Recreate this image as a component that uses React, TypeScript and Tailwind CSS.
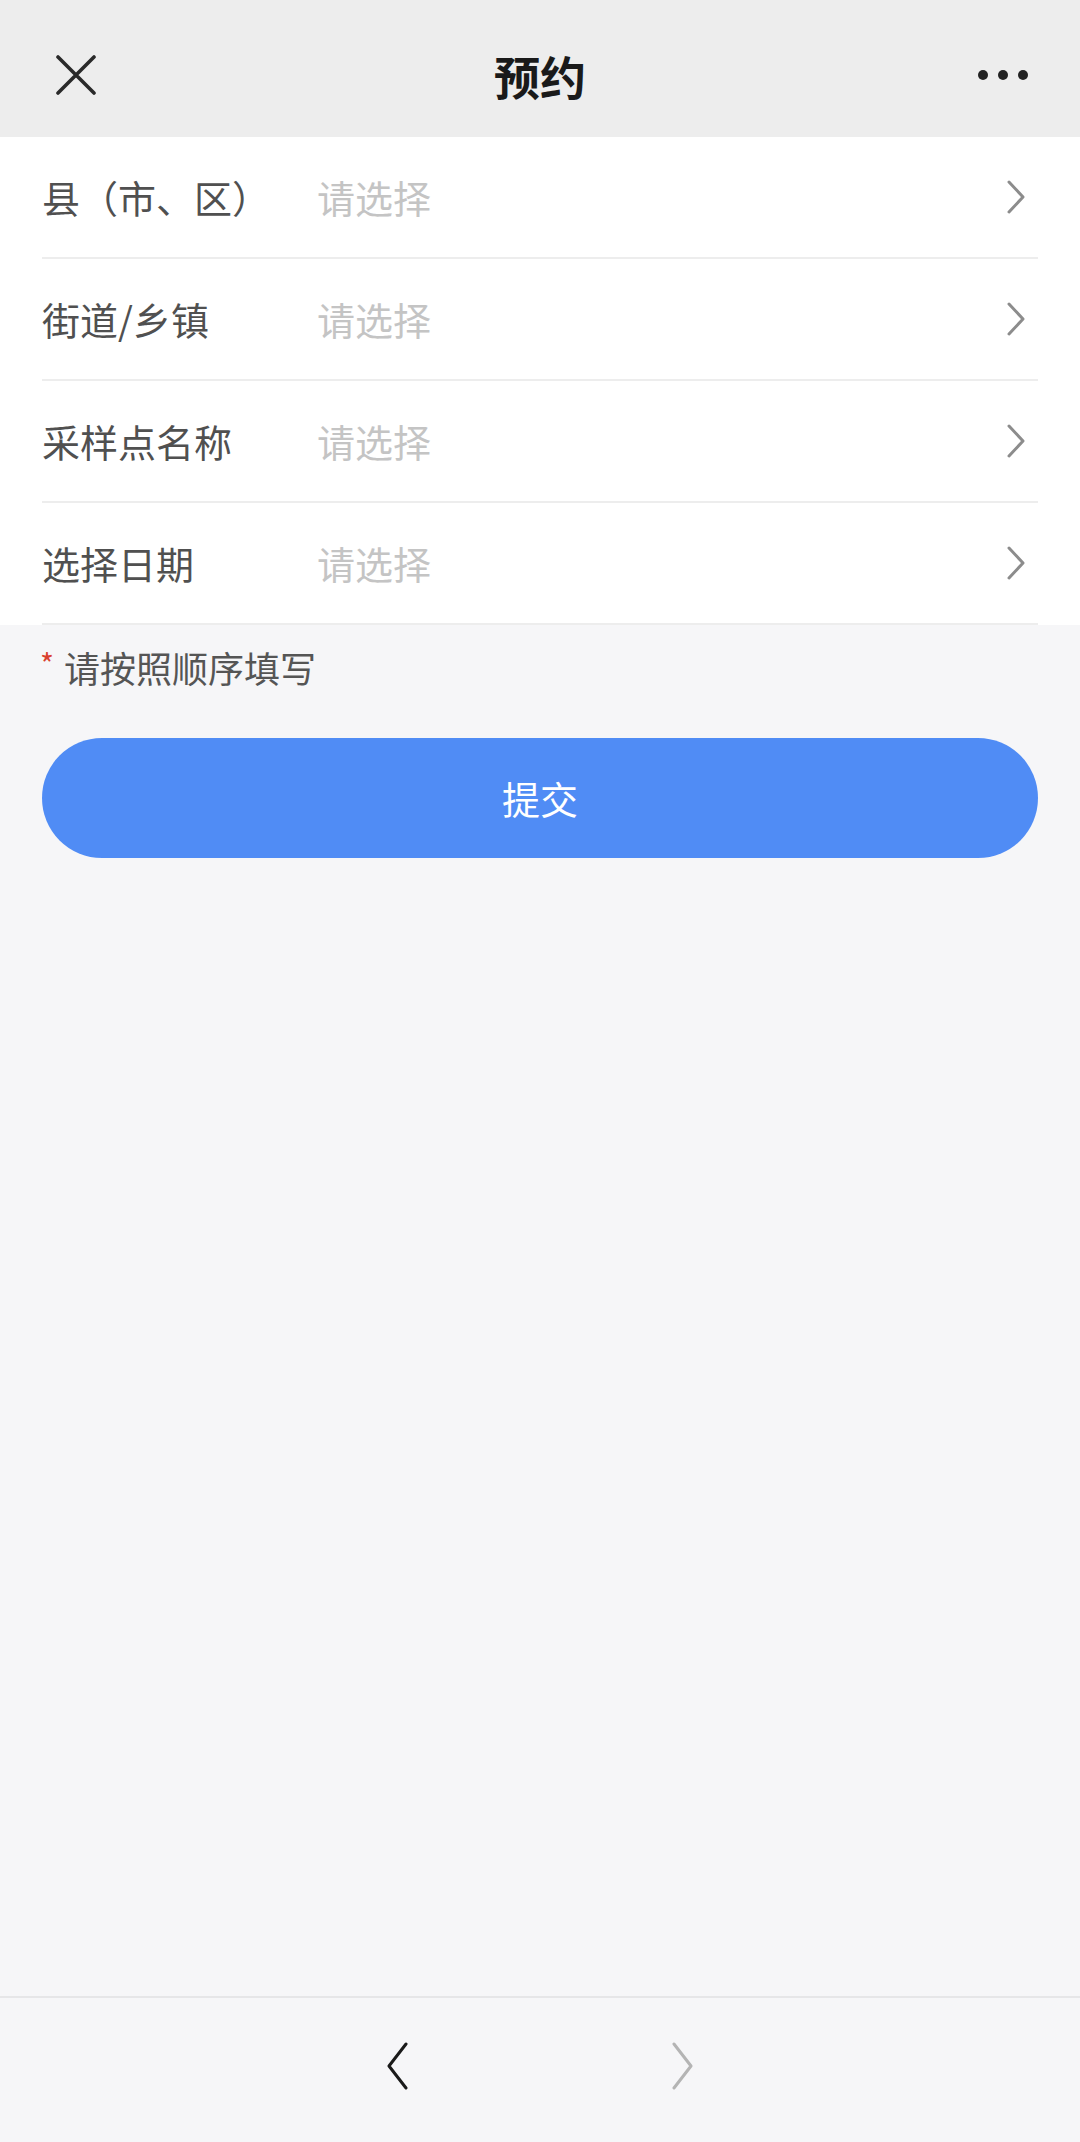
import React from "react";

const rows = ["县（市、区）", "街道/乡镇", "采样点名称", "选择日期"];

function Chevron({ className }: { className?: string }) {
  return (
    <svg width="20" height="34" viewBox="0 0 20 34" className={className} fill="none">
      <path d="M3 2 L17 17 L3 32" stroke="currentColor" strokeWidth="3" strokeLinecap="round" strokeLinejoin="round" />
    </svg>
  );
}

export default function App() {
  return (
    <div
      className="w-[1080px] h-[2142px] flex flex-col bg-[#f6f6f8] overflow-hidden"
      style={{ fontFamily: '"Noto Sans CJK SC", "Noto Sans", sans-serif' }}
    >
      {/* Header */}
      <div className="h-[137px] bg-[#ededed] flex items-center justify-between pl-[56px] pr-[52px] pt-[12px] shrink-0 relative">
        <svg width="40" height="40" viewBox="0 0 40 40" fill="none">
          <path d="M2 2 L38 38 M38 2 L2 38" stroke="#2a2a2a" strokeWidth="3.6" strokeLinecap="round" />
        </svg>
        <div className="absolute left-0 right-0 top-0 h-[137px] pt-[12px] flex items-center justify-center pointer-events-none">
          <span className="text-[46px] font-bold text-[#1a1a1a] leading-none">预约</span>
        </div>
        <div className="flex items-center gap-[10px]">
          <span className="w-[10px] h-[10px] rounded-full bg-[#222]" />
          <span className="w-[10px] h-[10px] rounded-full bg-[#222]" />
          <span className="w-[10px] h-[10px] rounded-full bg-[#222]" />
        </div>
      </div>

      {/* Form rows */}
      <div className="bg-white px-[42px] shrink-0">
        {rows.map((label) => (
          <div key={label} className="h-[122px] flex items-center border-b-2 border-[#ededed]">
            <div className="w-[275px] text-[38px] text-[#505050] leading-none">{label}</div>
            <div className="flex-1 text-[38px] text-[#c4c4c4] leading-none">请选择</div>
            <Chevron className="text-[#8c8c8c] mr-[12px]" />
          </div>
        ))}
      </div>

      {/* Note */}
      <div className="px-[40px] flex items-center h-[84px] shrink-0">
        <span className="text-[#d9412f] text-[30px] leading-none mr-[10px] mt-[-8px]">*</span>
        <span className="text-[36px] text-[#555555] leading-none">请按照顺序填写</span>
      </div>

      {/* Submit */}
      <div className="px-[42px] mt-[29px] shrink-0">
        <div className="h-[120px] rounded-full bg-[#508cf5] flex items-center justify-center">
          <span className="text-white text-[38px] leading-none">提交</span>
        </div>
      </div>

      <div className="flex-1" />

      {/* Bottom bar */}
      <div className="h-[146px] border-t-2 border-[#e6e6e8] bg-[#f6f6f8] flex items-start justify-center shrink-0">
        <div className="flex items-center gap-[258px] mt-[44px]">
          <svg width="28" height="48" viewBox="0 0 28 48" fill="none">
            <path d="M23 2 L6 24 L23 46" stroke="#1a1a1a" strokeWidth="3" strokeLinecap="round" strokeLinejoin="round" />
          </svg>
          <svg width="28" height="48" viewBox="0 0 28 48" fill="none">
            <path d="M5 2 L22 24 L5 46" stroke="#b4b4b4" strokeWidth="3" strokeLinecap="round" strokeLinejoin="round" />
          </svg>
        </div>
      </div>
    </div>
  );
}
